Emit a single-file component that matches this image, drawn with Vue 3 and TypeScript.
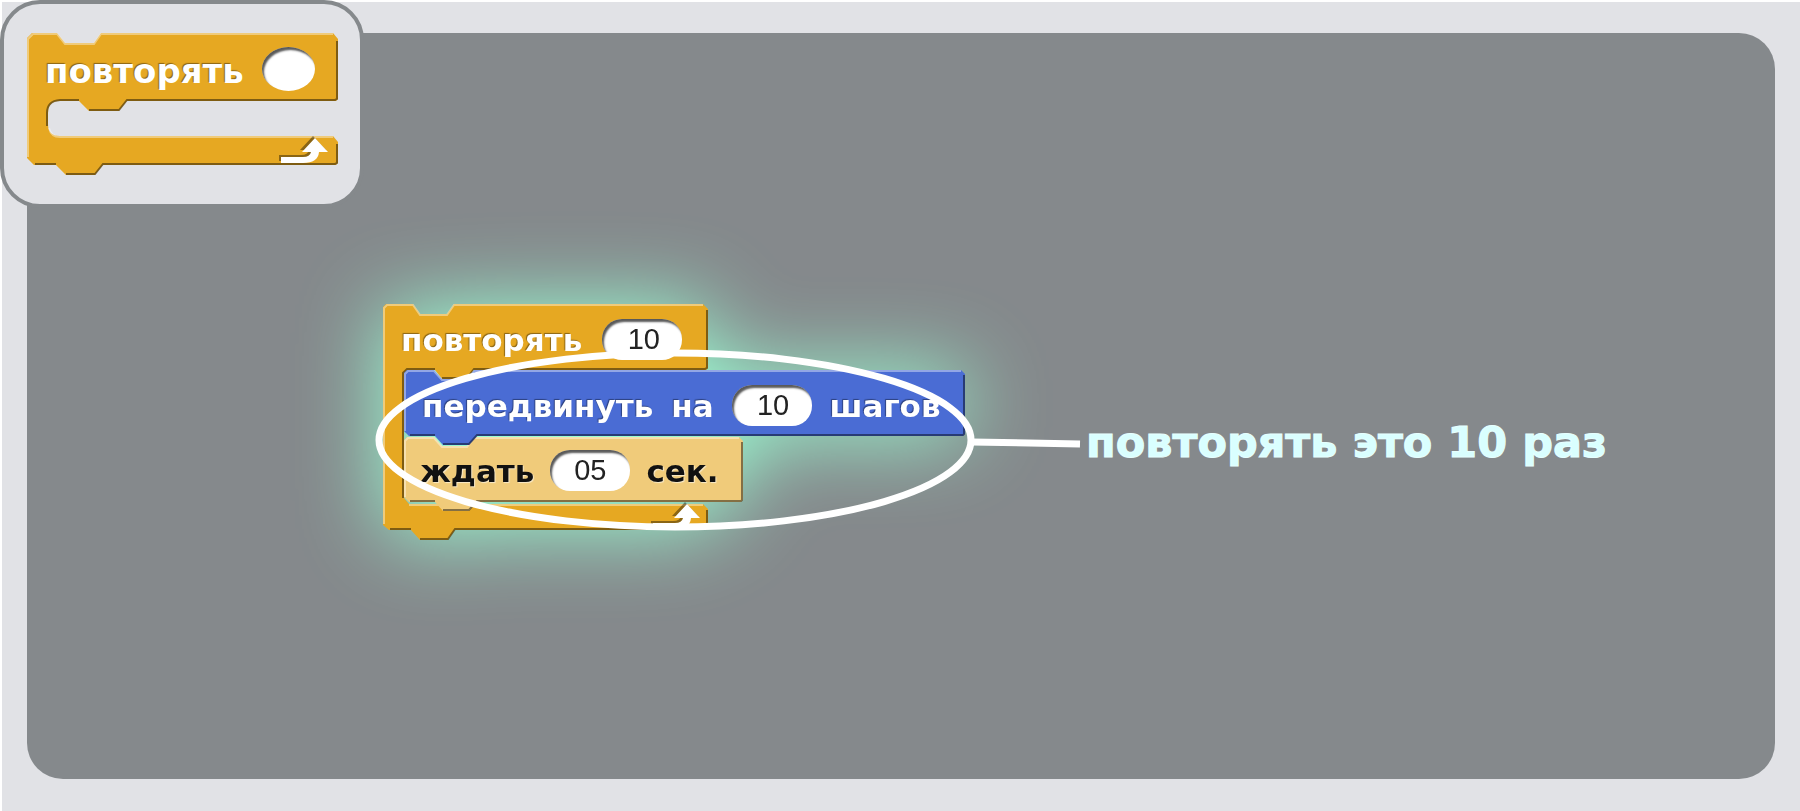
<script setup lang="ts">
interface Part {
  kind: 'label' | 'field'
  text: string
}

interface Command {
  id: string
  width: number
  height: number
  parts: Part[]
}

const commands: Command[] = [
  {
    id: 'move',
    width: 561,
    height: 66,
    parts: [
      { kind: 'label', text: 'передвинуть' },
      { kind: 'label', text: 'на' },
      { kind: 'field', text: '10' },
      { kind: 'label', text: 'шагов' },
    ],
  },
  {
    id: 'wait',
    width: 339,
    height: 65,
    parts: [
      { kind: 'label', text: 'ждать' },
      { kind: 'field', text: '05' },
      { kind: 'label', text: 'сек.' },
    ],
  },
]

const outline = (w: number, h: number): string =>
  `M0 3 L3 0 H30 L38 9 H63 L70 0 H${w - 4} L${w} 4 V${h - 2} L${w - 2} ${h} H73 L65 ${h + 9} H39 L31 ${h} H5 L0 ${h - 5} Z`

const lightEdge = (w: number, h: number): string =>
  `M1 ${h - 5} V4 L4 1 H30 L38 10 H63 L70 1 H${w - 4}`

const darkEdge = (w: number, h: number): string =>
  `M${w - 1} 5 V${h - 2} L${w - 2} ${h - 1} H73 L65 ${h + 8} H39 M31 ${h - 1} H6`

const arrow = 'M0 19 H22 Q29 19 30 14 H21 L34 0 L47 14 H38 Q37 25 22 25 H0 Z'
</script>

<template>
  <main class="page">
    <section class="stage">
      <div class="script">
        <svg class="shape" width="325" height="237" viewBox="0 0 325 237" aria-hidden="true">
          <path
            class="orange"
            d="M0 3 L3 0 H30 L37 10 H64 L71 0 H320 L325 5 V64 L323 66 H91 L84 75 H59 L52 66 H24 L21 69 V194 L26 200 H320 L325 205 V224 L323 226 H72 L65 236 H37 L28 226 H6 L0 221 Z"
          />
          <path class="light" d="M1 220 V4 L4 1 H30 L37 11 H64 L71 1 H320 M26 201 H320" />
          <path
            class="dark"
            d="M324 6 V64 L322 65 H91 L84 74 H59 M52 65 H24 L20 69 V194 M324 206 V224 L322 225 H72 L65 235 H37 M28 225 H7"
          />
        </svg>
        <div class="row head">
          <span class="label">повторять</span>
          <input class="field" type="text" value="10" aria-label="Число повторов" />
        </div>
        <div class="body">
          <div v-for="c in commands" :key="c.id" class="command" :class="c.id">
            <svg
              class="shape"
              :width="c.width"
              :height="c.height"
              :viewBox="`0 0 ${c.width} ${c.height}`"
              aria-hidden="true"
            >
              <path class="fill" :d="outline(c.width, c.height)" />
              <path class="light" :d="lightEdge(c.width, c.height)" />
              <path class="dark" :d="darkEdge(c.width, c.height)" />
            </svg>
            <div class="row">
              <template v-for="(p, i) in c.parts" :key="i">
                <span v-if="p.kind === 'label'" class="label">{{ p.text }}</span>
                <input v-else class="field" type="text" :value="p.text" :aria-label="c.parts[0].text" />
              </template>
            </div>
          </div>
        </div>
        <div class="foot">
          <svg class="arrow" width="47" height="25" viewBox="0 0 47 25" aria-hidden="true">
            <path class="arrow-shade" :d="arrow" />
            <path class="arrow-face" :d="arrow" />
          </svg>
        </div>
      </div>

      <svg class="ring" width="710" height="184" viewBox="0 0 710 184" aria-hidden="true">
        <ellipse cx="301" cy="92" rx="296" ry="87" />
        <path d="M598 94 L706 96" />
      </svg>
      <p class="caption">повторять это 10 раз</p>
    </section>

    <aside class="palette">
      <div class="sample">
        <svg class="shape" width="311" height="142" viewBox="0 0 311 142" aria-hidden="true">
          <path
            class="orange"
            d="M0 5 L5 0 H30 L38 10 H67 L74 0 H306 L311 6 V66 L309 68 H100 L92 78 H62 L52 68 H33 Q21 68 21 80 V91 Q21 103 33 103 H306 L311 109 V130 L309 132 H76 L68 142 H39 L29 132 H7 L0 125 Z"
          />
          <path class="light" d="M1 124 V6 L6 1 H30 L38 11 H67 L74 1 H306 M22 95 Q24 104 33 104 H306" />
          <path
            class="dark"
            d="M310 8 V66 L308 67 H100 L92 77 H62 M52 67 H33 Q20 68 20 80 V93 M310 111 V130 L308 131 H76 L68 141 H39 M29 131 H8"
          />
        </svg>
        <div class="row head">
          <span class="label">повторять</span>
          <input class="field round" type="text" aria-label="Число повторов" />
        </div>
        <svg class="arrow" width="47" height="25" viewBox="0 0 47 25" aria-hidden="true">
          <path class="arrow-shade" :d="arrow" />
          <path class="arrow-face" :d="arrow" />
        </svg>
      </div>
    </aside>
  </main>
</template>

<style>
body {
  margin: 0;
}
</style>

<style scoped>
.page {
  position: relative;
  box-sizing: border-box;
  display: flex;
  min-height: 100vh;
  padding: 31px 25px 32px;
  border-top: 2px solid #fff;
  border-left: 2px solid #fff;
  background: #e1e2e6;
  font-family: "DejaVu Sans", Verdana, sans-serif;
}

.stage {
  position: relative;
  box-sizing: border-box;
  flex: 1;
  display: flex;
  align-items: flex-start;
  padding: 271px 40px 40px 356px;
  border-radius: 36px;
  background: #85898c;
}

.script {
  position: relative;
  width: 582px;
  flex: none;
  filter: drop-shadow(0 0 42px #9bffd4);
}

.shape {
  position: absolute;
  top: 0;
  left: 0;
  overflow: visible;
}

.orange {
  fill: #e6a822;
}

.light,
.dark {
  fill: none;
  stroke-width: 2;
}

.light {
  stroke: #fff;
  stroke-opacity: 0.4;
}

.dark {
  stroke: #000;
  stroke-opacity: 0.45;
}

.row {
  position: relative;
  box-sizing: border-box;
  display: flex;
  align-items: center;
  gap: 18px;
  height: 67px;
  padding-left: 18px;
}

.head {
  gap: 20px;
  height: 66px;
  padding-top: 4px;
}

.label {
  color: #fff;
  font-size: 31px;
  font-weight: bold;
  line-height: 32px;
  text-shadow: -1px -1px 1px rgba(0, 0, 0, 0.4);
  white-space: nowrap;
}

.head .label {
  padding-top: 2px;
}

.field {
  box-sizing: border-box;
  width: 80px;
  height: 41px;
  padding: 0 0 0 3px;
  border: 0;
  border-radius: 20px;
  background: #fff;
  box-shadow: inset 2px 3px 2px rgba(0, 0, 0, 0.65);
  color: #222;
  font-family: "Liberation Sans", Arial, sans-serif;
  font-size: 29px;
  text-align: center;
}

.body {
  padding-left: 21px;
}

.command {
  position: relative;
}

.move {
  z-index: 1;
}

.move .row {
  padding-top: 4px;
}

.wait .row {
  gap: 16px;
  padding-left: 16px;
}

.wait .field {
  padding: 0;
}

.move .fill {
  fill: #4a6cd4;
}

.wait .fill {
  fill: #f0cb7a;
}

.wait .label {
  color: #111;
  text-shadow: 1px 1px 1px rgba(255, 255, 255, 0.6);
}

.foot {
  position: relative;
  display: flex;
  justify-content: flex-end;
  width: 317px;
  height: 37px;
}

.arrow {
  position: relative;
  overflow: visible;
}

.arrow-face {
  fill: #fff;
}

.arrow-shade {
  fill: #000;
  fill-opacity: 0.4;
  transform: translate(-2px, -2px);
}

.ring {
  position: absolute;
  top: 315px;
  left: 347px;
  fill: none;
  stroke: #fff;
  stroke-width: 7;
}

.caption {
  margin: 112px 0 0 121px;
  color: #d9ffff;
  font-size: 43px;
  font-weight: bold;
  line-height: 52px;
  white-space: nowrap;
  -webkit-text-stroke: 1px #e6ffff;
}

.palette {
  position: absolute;
  top: -2px;
  left: -2px;
  box-sizing: border-box;
  width: 364px;
  height: 208px;
  padding: 29px 23px;
  border: 4px solid #85898c;
  border-radius: 40px;
  background: #e1e2e6;
}

.sample {
  position: relative;
  display: flex;
  flex-direction: column;
  width: 311px;
}

.sample .head {
  gap: 18px;
  height: 68px;
}

.sample .label {
  padding-top: 4px;
  font-size: 34px;
}

.sample .round {
  width: 53px;
  height: 44px;
  border-radius: 50%;
}

.sample .arrow {
  align-self: flex-end;
  margin: 37px 10px 0 0;
}
</style>
